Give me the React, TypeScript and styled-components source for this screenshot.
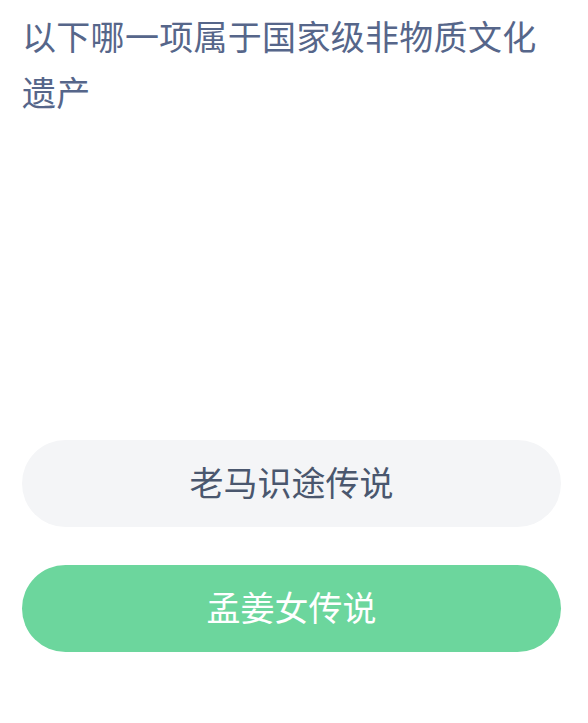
import React from "react";
import styled, { createGlobalStyle } from "styled-components";

const Global = createGlobalStyle`
  html, body { margin: 0; padding: 0; background: #ffffff; }
  body { font-family: "Noto Sans CJK SC", "Noto Sans", sans-serif; }
`;

const Page = styled.div`
  width: 588px;
  height: 723px;
  box-sizing: border-box;
  padding: 8px 27px 0 22px;
  display: flex;
  flex-direction: column;
  background: #ffffff;
`;

const Question = styled.h1`
  margin: 0;
  font-size: 34px;
  line-height: 56px;
  font-weight: 400;
  color: #56668a;
  letter-spacing: 0.3px;
`;

const Options = styled.div`
  margin-top: 320px;
  display: flex;
  flex-direction: column;
  gap: 38px;
`;

const Option = styled.button<{ $selected?: boolean }>`
  height: 87px;
  border: none;
  border-radius: 44px;
  font-family: "Noto Sans CJK SC", "Noto Sans", sans-serif;
  font-size: 34px;
  font-weight: 400;
  background: ${(p) => (p.$selected ? "#6cd69d" : "#f4f5f7")};
  color: ${(p) => (p.$selected ? "#ffffff" : "#4a576e")};
  display: flex;
  align-items: center;
  justify-content: center;
  padding: 0 0 4px 0;
`;

export default function App() {
  return (
    <>
      <Global />
      <Page>
        <Question>以下哪一项属于国家级非物质文化遗产</Question>
        <Options>
          <Option>老马识途传说</Option>
          <Option $selected>孟姜女传说</Option>
        </Options>
      </Page>
    </>
  );
}
